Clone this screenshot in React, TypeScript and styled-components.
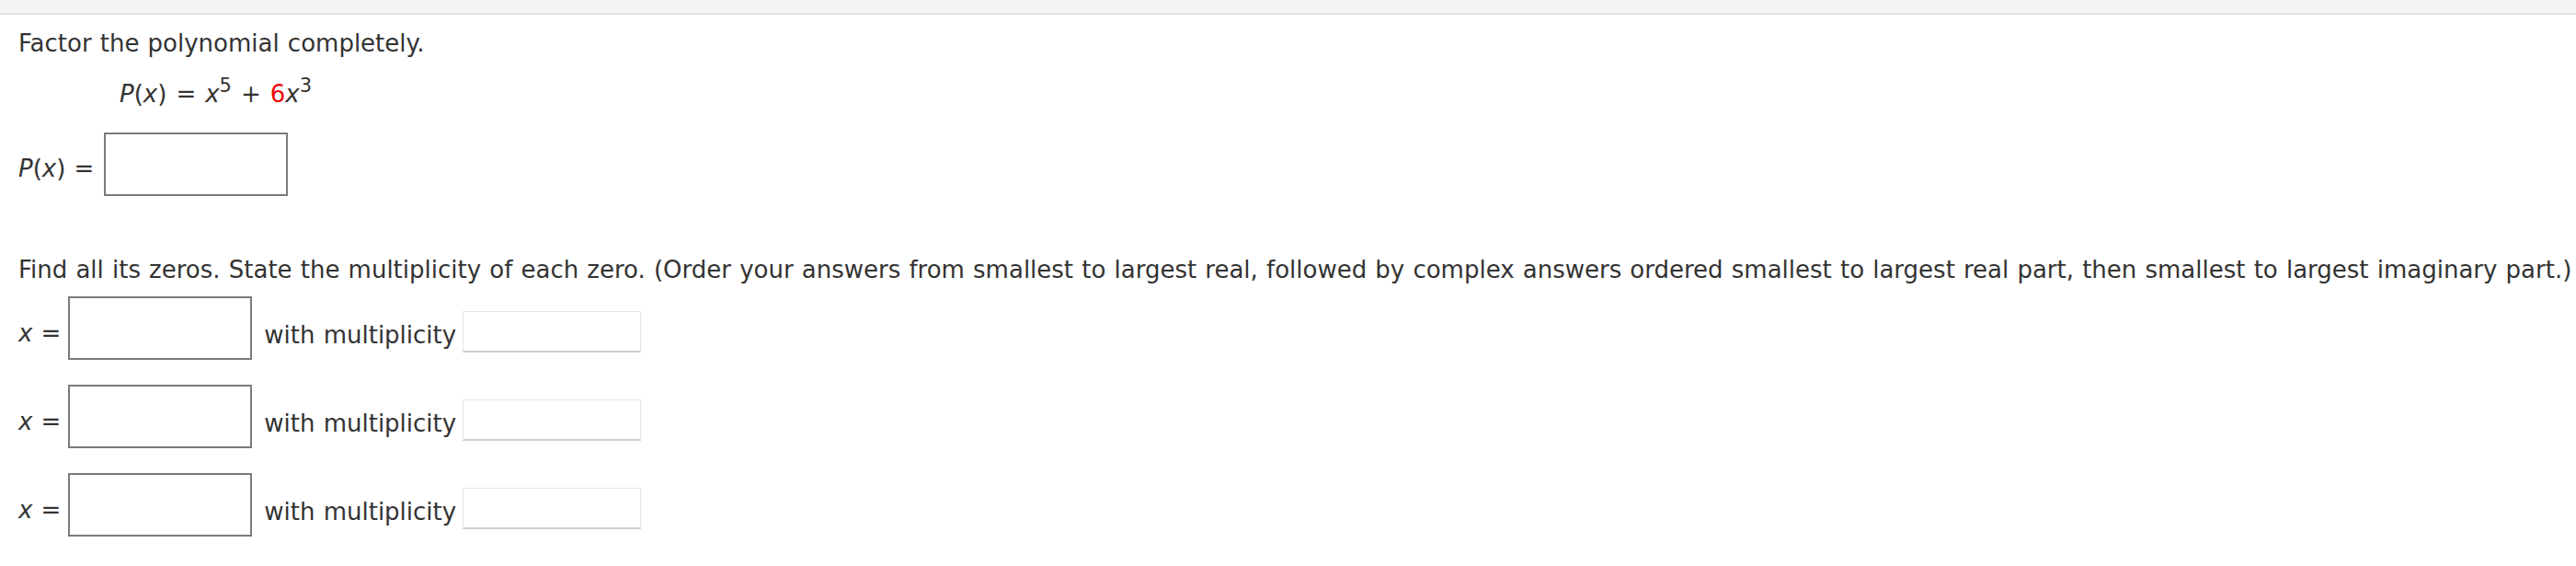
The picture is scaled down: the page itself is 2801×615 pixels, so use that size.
import styled, { createGlobalStyle } from "styled-components";

const GlobalStyle = createGlobalStyle`
  body {
    margin: 0;
    background: #fff;
    font-family: "DejaVu Sans", Verdana, sans-serif;
    font-size: 26px;
    word-spacing: 0.9px;
    color: #333;
  }
`;

const TopBar = styled.div`
  height: 14px;
  background: #f5f5f5;
  border-bottom: 2px solid #e2e2e2;
`;

const Content = styled.div`
  padding: 16px 0 0 20px;
  line-height: 30px;
`;

const Prompt = styled.p<{ $top?: number }>`
  margin: ${(p) => p.$top ?? 0}px 0 0;
  white-space: nowrap;
`;

const Equation = styled.div`
  margin: 25px 0 0 110px;
  white-space: nowrap;
`;

const Var = styled.i`
  font-style: italic;
`;

const Op = styled.span`
  margin: 0 10px;
`;

const Sup = styled.sup`
  font-size: 21px;
  line-height: 0;
  vertical-align: 11px;
`;

const Highlight = styled.span`
  color: #e00;
`;

const Row = styled.div<{ $top: number }>`
  display: flex;
  align-items: center;
  margin-top: ${(p) => p.$top}px;
`;

const Label = styled.span<{ $shift: number; $gap: number; $lead?: number }>`
  margin-top: ${(p) => p.$shift}px;
  margin-right: ${(p) => p.$gap}px;
  margin-left: ${(p) => p.$lead ?? 0}px;
  white-space: nowrap;
`;

const AnswerBox = styled.div`
  width: 196px;
  height: 65px;
  border: 2px solid #7b7b7b;
  background: #fff;
`;

const MultBox = styled.div`
  width: 192px;
  height: 42px;
  margin-top: 7px;
  border: 1px solid #e6e6e6;
  border-bottom: 2px solid #cfcfcf;
  background: #fff;
`;

const Zero = () => (
  <>
    <Label $shift={10} $gap={8}>
      <Var>x</Var> =
    </Label>
    <AnswerBox />
    <Label $shift={14} $gap={7} $lead={13}>
      with multiplicity
    </Label>
    <MultBox />
  </>
);

export default function App() {
  return (
    <>
      <GlobalStyle />
      <TopBar />
      <Content>
        <Prompt>Factor the polynomial completely.</Prompt>
        <Equation>
          <Var>P</Var>(<Var>x</Var>)<Op>=</Op>
          <Var>x</Var>
          <Sup>5</Sup>
          <Op>+</Op>
          <Highlight>6</Highlight>
          <Var>x</Var>
          <Sup>3</Sup>
        </Equation>
        <Row $top={27}>
          <Label $shift={9} $gap={11}>
            <Var>P</Var>(<Var>x</Var>) =
          </Label>
          <AnswerBox />
        </Row>
        <Prompt $top={65}>
          Find all its zeros. State the multiplicity of each zero. (Order your answers from smallest to
          largest real, followed by complex answers ordered smallest to largest real part, then smallest
          to largest imaginary part.)
        </Prompt>
        <Row $top={14}>
          <Zero />
        </Row>
        <Row $top={27}>
          <Zero />
        </Row>
        <Row $top={27}>
          <Zero />
        </Row>
      </Content>
    </>
  );
}
